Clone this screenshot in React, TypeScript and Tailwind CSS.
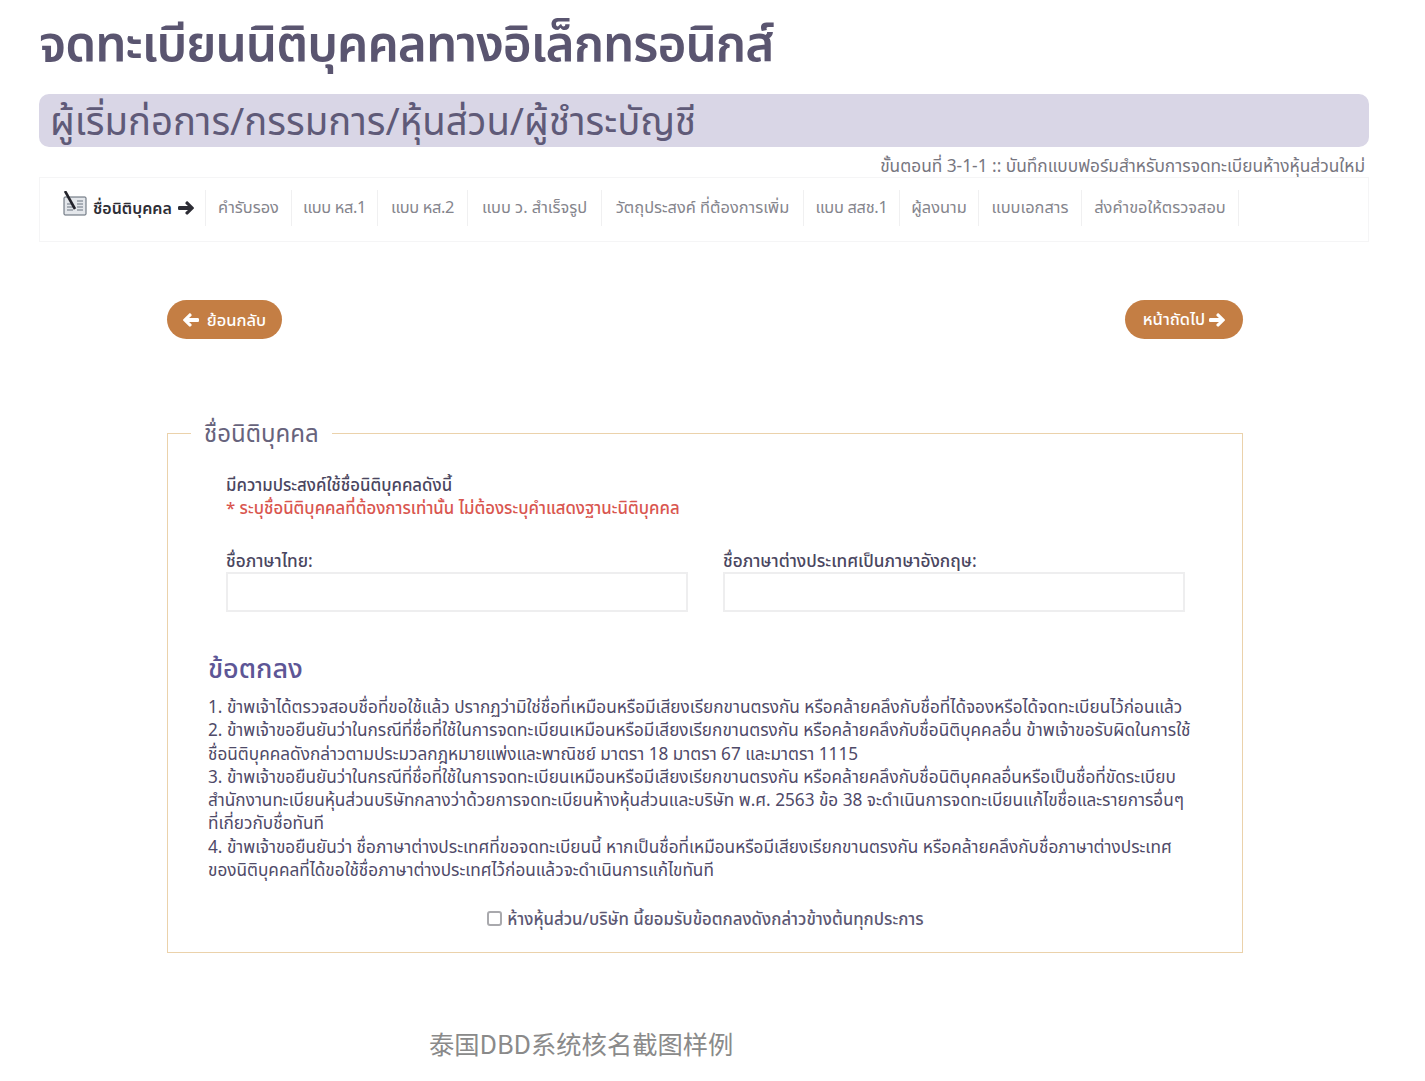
const font = "font-['Noto_Sans','Noto_Sans_Thai','Open_Sans','DejaVu_Sans',sans-serif]";

function LeftArrow() {
  return (
    <svg width="16" height="14" viewBox="0 0 16 14" fill="#fff" aria-hidden="true">
      <path d="M0.4 6.2 6 0.7 C6.5 0.2 7.3 0.2 7.8 0.7 L8.3 1.2 C8.8 1.7 8.8 2.5 8.3 3 L6 5 H14.7 C15.4 5 16 5.6 16 6.3 V7.7 C16 8.4 15.4 9 14.7 9 H6 L8.3 11 C8.8 11.5 8.8 12.3 8.3 12.8 L7.8 13.3 C7.3 13.8 6.5 13.8 6 13.3 L0.4 7.8 C-0.1 7.3 -0.1 6.7 0.4 6.2 Z" />
    </svg>
  );
}

function RightArrow({ color = "#fff" }: { color?: string }) {
  return (
    <svg width="16" height="14" viewBox="0 0 16 14" fill={color} aria-hidden="true">
      <path d="M15.6 6.2 10 0.7 C9.5 0.2 8.7 0.2 8.2 0.7 L7.7 1.2 C7.2 1.7 7.2 2.5 7.7 3 L10 5 H1.3 C0.6 5 0 5.6 0 6.3 V7.7 C0 8.4 0.6 9 1.3 9 H10 L7.7 11 C7.2 11.5 7.2 12.3 7.7 12.8 L8.2 13.3 C8.7 13.8 9.5 13.8 10 13.3 L15.6 7.8 C16.1 7.3 16.1 6.7 15.6 6.2 Z" />
    </svg>
  );
}

function FormIcon() {
  return (
    <svg width="24" height="26" viewBox="0 0 24 26" aria-hidden="true">
      <rect x="1" y="6" width="22" height="18" rx="1" fill="#e4e7eb" stroke="#5a6470" strokeWidth="1" />
      <path d="M4 13h6M4 16h6M4 19h6M14 10h6M14 13h6M14 16h6M14 19h6" stroke="#6b7580" strokeWidth="1" />
      <path d="M2 0 L12 18" stroke="#23232b" strokeWidth="2.6" />
    </svg>
  );
}

const tabs = [
  { label: "คำรับรอง", cls: "w-[86px]" },
  { label: "แบบ หส.1", cls: "w-[86px] tracking-[-0.4px]" },
  { label: "แบบ หส.2", cls: "w-[90px] tracking-[-0.4px]" },
  { label: "แบบ ว. สำเร็จรูป", cls: "w-[134px]" },
  { label: "วัตถุประสงค์ ที่ต้องการเพิ่ม", cls: "w-[202px]" },
  { label: "แบบ สสช.1", cls: "w-[96px] tracking-[-0.3px]" },
  { label: "ผู้ลงนาม", cls: "w-[79px]" },
  { label: "แบบเอกสาร", cls: "w-[103px]" },
  { label: "ส่งคำขอให้ตรวจสอบ", cls: "w-[157px]" },
];

const terms = [
  "1. ข้าพเจ้าได้ตรวจสอบชื่อที่ขอใช้แล้ว ปรากฏว่ามิใช่ชื่อที่เหมือนหรือมีเสียงเรียกขานตรงกัน หรือคล้ายคลึงกับชื่อที่ได้จองหรือได้จดทะเบียนไว้ก่อนแล้ว",
  "2. ข้าพเจ้าขอยืนยันว่าในกรณีที่ชื่อที่ใช้ในการจดทะเบียนเหมือนหรือมีเสียงเรียกขานตรงกัน หรือคล้ายคลึงกับชื่อนิติบุคคลอื่น ข้าพเจ้าขอรับผิดในการใช้ ชื่อนิติบุคคลดังกล่าวตามประมวลกฎหมายแพ่งและพาณิชย์ มาตรา 18 มาตรา 67 และมาตรา 1115",
  "3. ข้าพเจ้าขอยืนยันว่าในกรณีที่ชื่อที่ใช้ในการจดทะเบียนเหมือนหรือมีเสียงเรียกขานตรงกัน หรือคล้ายคลึงกับชื่อนิติบุคคลอื่นหรือเป็นชื่อที่ขัดระเบียบ สำนักงานทะเบียนหุ้นส่วนบริษัทกลางว่าด้วยการจดทะเบียนห้างหุ้นส่วนและบริษัท พ.ศ. 2563 ข้อ 38 จะดำเนินการจดทะเบียนแก้ไขชื่อและรายการอื่นๆ ที่เกี่ยวกับชื่อทันที",
  "4. ข้าพเจ้าขอยืนยันว่า ชื่อภาษาต่างประเทศที่ขอจดทะเบียนนี้ หากเป็นชื่อที่เหมือนหรือมีเสียงเรียกขานตรงกัน หรือคล้ายคลึงกับชื่อภาษาต่างประเทศ ของนิติบุคคลที่ได้ขอใช้ชื่อภาษาต่างประเทศไว้ก่อนแล้วจะดำเนินการแก้ไขทันที",
];

export default function App() {
  return (
    <div className={`${font} min-h-[1081px] bg-white text-[#4f4a68]`}>
      <div className="pl-[39px] pr-[56px]">
        <h1 className="h-[94px] pt-[12px] text-[49.5px] leading-[60px] font-semibold tracking-[-1px] text-[#5a5570]">
          จดทะเบียนนิติบุคคลทางอิเล็กทรอนิกส์
        </h1>
        <div className="h-[53px] rounded-[10px] bg-[#d9d6e6] pl-[11px] text-[38.3px] leading-[52px] text-[#5f5a78]">
          ผู้เริ่มก่อการ/กรรมการ/หุ้นส่วน/ผู้ชำระบัญชี
        </div>
        <div className="h-[30px] pr-[4px] pt-[9px] text-right text-[17.3px] leading-[20px] text-[#77767f]">
          ขั้นตอนที่ 3-1-1 :: บันทึกแบบฟอร์มสำหรับการจดทะเบียนห้างหุ้นส่วนใหม่
        </div>
        <nav className="flex h-[65px] items-center border border-[#f5f5f6] pb-[4px] pl-[23px] text-[16.4px] text-[#85858d]">
          <div className="flex h-[36px] w-[143px] items-center gap-[6px] border-r border-[#f0f0f1] text-[16px] font-semibold text-[#2d2d35]">
            <span className="mb-[8px]">
              <FormIcon />
            </span>
            <span>ชื่อนิติบุคคล</span>
            <RightArrow color="#2d2d35" />
          </div>
          {tabs.map((t) => (
            <div key={t.label} className={`flex h-[36px] items-center justify-center whitespace-nowrap border-r border-[#f0f0f1] ${t.cls}`}>
              {t.label}
            </div>
          ))}
        </nav>
      </div>

      <div className="ml-[167px] w-[1076px]">
        <div className="flex justify-between pt-[58px]">
          <button className="flex h-[39px] w-[115px] items-center justify-center gap-[8px] rounded-full bg-[#c47e44] text-[16.5px] leading-[37px] font-medium text-white">
            <LeftArrow />
            ย้อนกลับ
          </button>
          <button className="flex h-[39px] w-[118px] items-center justify-center gap-[4px] rounded-full bg-[#c47e44] text-[16.5px] font-medium text-white">
            หน้าถัดไป
            <RightArrow />
          </button>
        </div>

        <fieldset className="mt-[79px] h-[535px] border border-[#ebd2ab] pl-[40px] pr-[48px]">
          <legend className="-ml-[17px] px-[13px] text-[24px] leading-[30px] text-[#67637c]">ชื่อนิติบุคคล</legend>
          <div className="pl-[18px] pt-[25px] text-[16.8px] leading-[23px] font-medium">
            <div className="text-[#4a4660]">มีความประสงค์ใช้ชื่อนิติบุคคลดังนี้</div>
            <div className="text-[#d9564f]">* ระบุชื่อนิติบุคคลที่ต้องการเท่านั้น ไม่ต้องระบุคำแสดงฐานะนิติบุคคล</div>
          </div>
          <div className="flex gap-[35px] pl-[18px] pt-[31px]">
            <label className="block w-[462px]">
              <span className="block text-[17.2px] leading-[22px] font-medium text-[#4a4660]">ชื่อภาษาไทย:</span>
              <input className="block h-[40px] w-full border-2 border-[#eeeeef] bg-white" />
            </label>
            <label className="block w-[462px]">
              <span className="block text-[17.2px] leading-[22px] font-medium text-[#4a4660]">ชื่อภาษาต่างประเทศเป็นภาษาอังกฤษ:</span>
              <input className="block h-[40px] w-full border-2 border-[#eeeeef] bg-white" />
            </label>
          </div>
          <h2 className="pt-[39px] text-[27px] leading-[34px] font-medium text-[#5d5696]">ข้อตกลง</h2>
          <div className="pt-[10px] text-[17.2px] leading-[23.3px] text-[#4f4a68]">
            {terms.map((t) => (
              <p key={t}>{t}</p>
            ))}
          </div>
          <label className="flex items-center justify-center gap-[5px] pl-[9px] pt-[25px] text-[16.8px] font-medium text-[#5c5873]">
            <span className="h-[15px] w-[15px] rounded-[3px] border-2 border-[#a9a9ad] bg-white" />
            ห้างหุ้นส่วน/บริษัท นี้ยอมรับข้อตกลงดังกล่าวข้างต้นทุกประการ
          </label>
        </fieldset>
      </div>

      <div className="pl-[429px] pt-[74px] font-['Noto_Sans_CJK_SC',sans-serif] text-[25.3px] leading-[32px] text-[#8a8a8a]">
        泰国DBD系统核名截图样例
      </div>
    </div>
  );
}
